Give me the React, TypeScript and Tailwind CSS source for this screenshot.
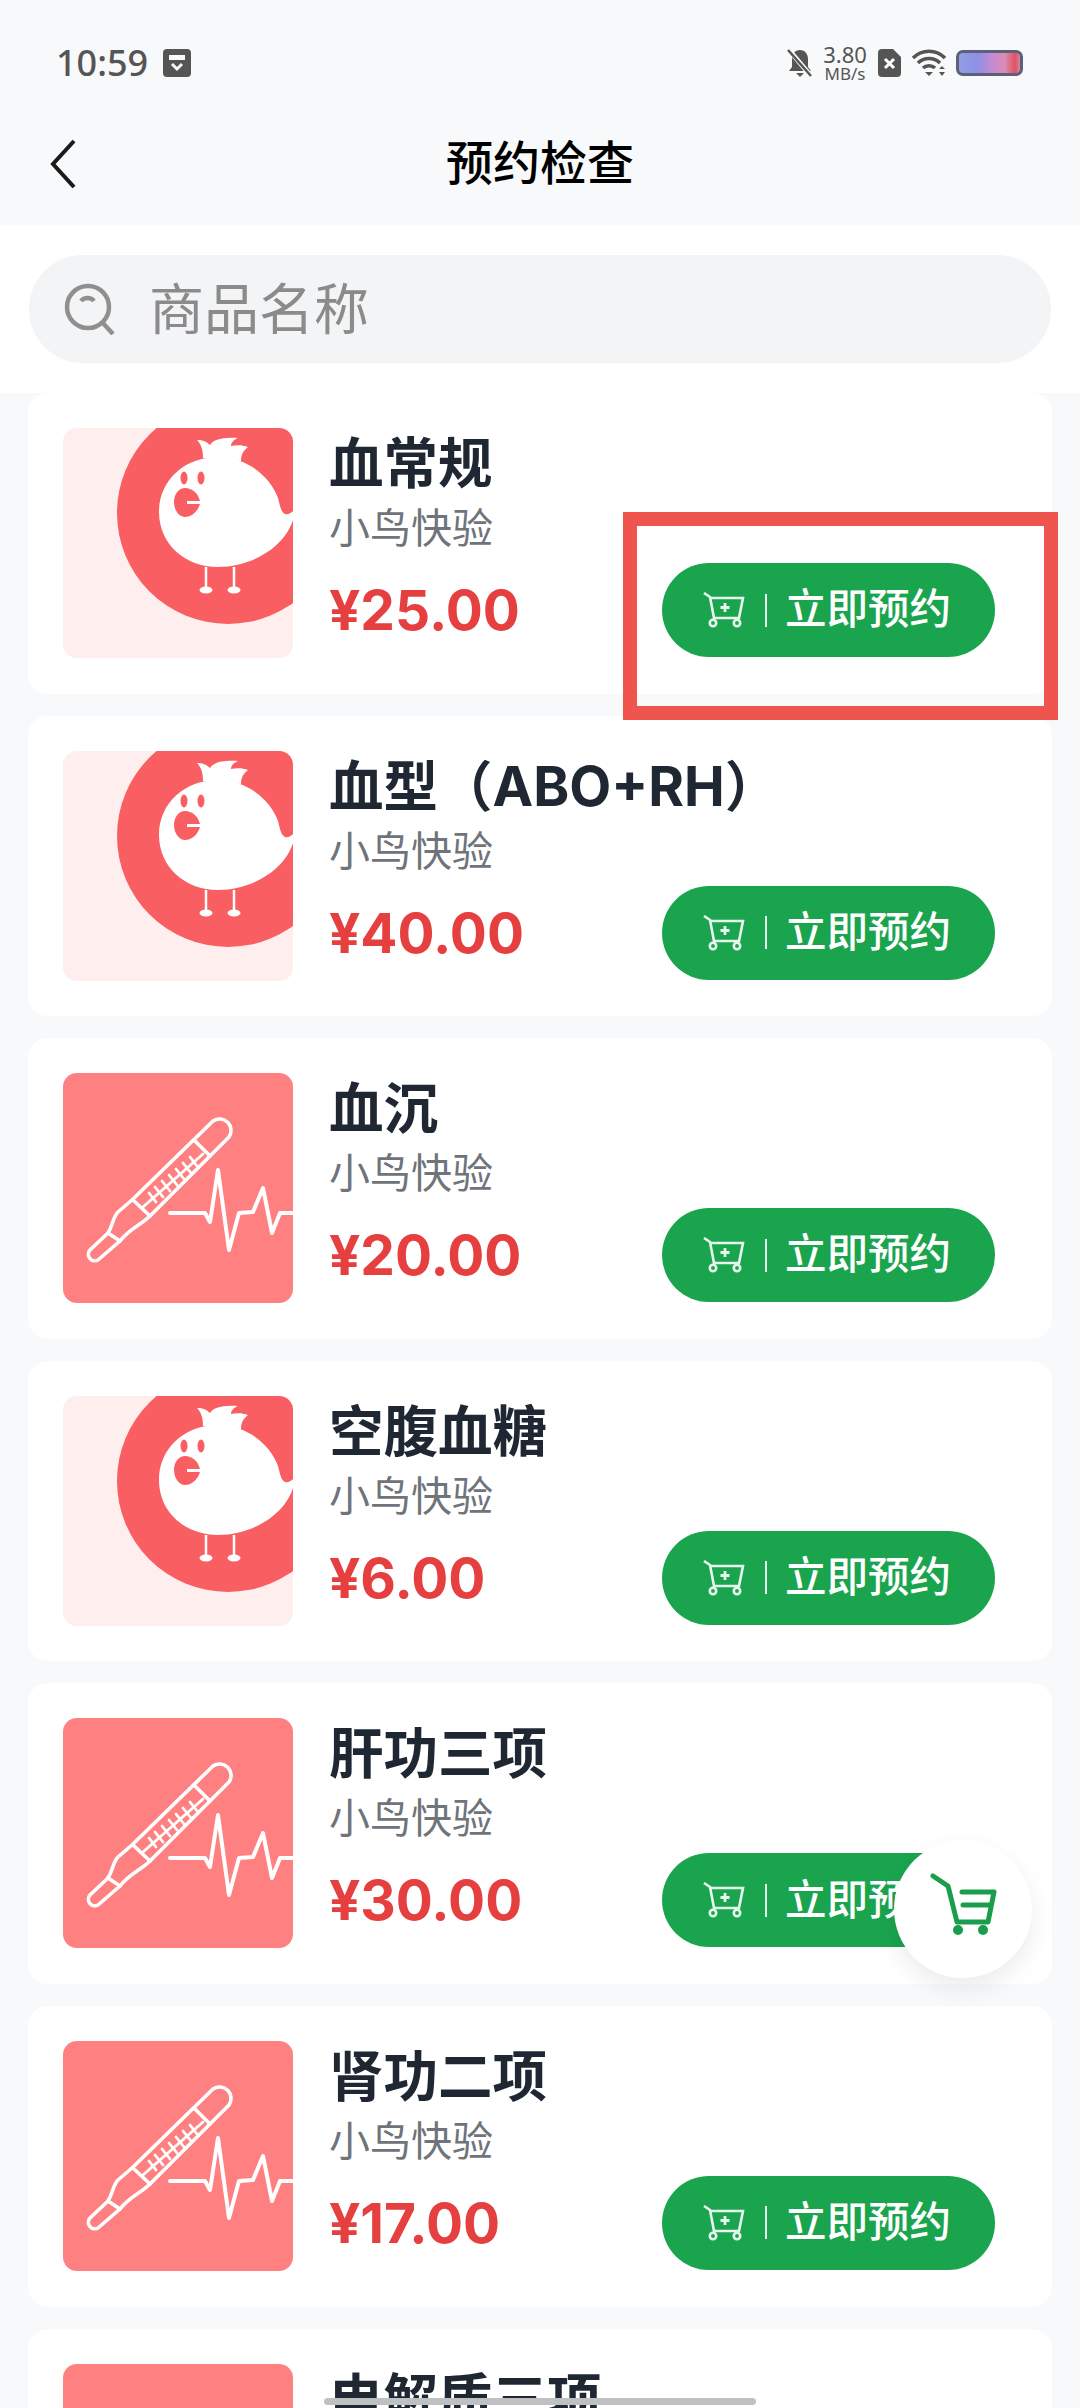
const products = [
  { name: "血常规", price: "¥25.00", image: "bird" },
  { name: "血型（ABO+RH）", price: "¥40.00", image: "bird" },
  { name: "血沉", price: "¥20.00", image: "thermo" },
  { name: "空腹血糖", price: "¥6.00", image: "bird" },
  { name: "肝功三项", price: "¥30.00", image: "thermo" },
  { name: "肾功二项", price: "¥17.00", image: "thermo" },
  { name: "电解质三项", price: "¥35.00", image: "thermo" },
];

function BirdImage() {
  return (
    <svg viewBox="0 0 230 230" className="h-full w-full">
      <rect width="230" height="230" fill="#feefee" />
      <circle cx="165" cy="85" r="111" fill="#f95f62" />
      {/* body and tail */}
      <path
        d="M96 84C96 52 122 29 155 29c30 0 53 21 60 41 2 8 3 14 7 16 3 1 6-1 8-3v9c-8 26-40 47-75 47-33 0-59-23-59-55z"
        fill="#fff"
      />
      {/* crest */}
      <path
        d="M140 30c0-8-2-14-6-18 6 0 10 2 13 5 3-5 11-8 28-7-5 2-7 5-7 8 5-1 12-1 17 1-4 3-7 7-7 14z"
        fill="#fff"
      />
      <ellipse cx="121" cy="50" rx="3.5" ry="6.5" fill="#f95f62" />
      <ellipse cx="138" cy="50" rx="3.5" ry="6.5" fill="#f95f62" />
      <path
        d="M111 74c0-8 5-14 11-14 7 0 13 5 15 13h-13v3h13c-2 7-8 13-15 13-6 0-11-7-11-15z"
        fill="#f95f62"
      />
      <path d="M143 139v20M171 139v20" stroke="#fff" strokeWidth="2.5" />
      <ellipse cx="143" cy="162" rx="6.5" ry="3.5" fill="#fff" />
      <ellipse cx="171" cy="162" rx="6.5" ry="3.5" fill="#fff" />
    </svg>
  );
}

function ThermoImage() {
  return (
    <svg viewBox="0 0 230 230" className="h-full w-full" fill="none" stroke="#fff" strokeLinecap="round" strokeLinejoin="round">
      <rect width="230" height="230" fill="#ff8080" stroke="none" />
      <path
        d="M27 177l18-17c5-8 5-16 10-21l14-12 81-79a11.5 11.5 0 0 1 16 16L87 143c-9 9-21 13-30 25l-22 19a6.5 6.5 0 0 1-8-10z"
        strokeWidth="3.6"
      />
      <path d="M45 160l12 8M70 127l17 16M131 67l16 16" strokeWidth="3.6" />
      <path
        d="M80 134l60-53M92 114l8 10M99 108l8 10M106 102l8 10M113 96l8 10M120 90l8 10M127 84l7 9M86 120l7 9"
        strokeWidth="2.8"
      />
      <path
        d="M107 140h35l5 9 8-52 11 80 10-37 14-1 10-24 9 45 8-20h13"
        strokeWidth="4"
      />
    </svg>
  );
}

function CartPlus() {
  return (
    <svg width="42" height="36" viewBox="0 0 42 36" fill="none" stroke="#e8f7ee" strokeWidth="2.6">
      <path d="M1 1l6 4 4 21h25l4-20H7" />
      <path d="M22 11v9M17.500 15.500h9" strokeWidth="2.8" />
      <circle cx="10" cy="31" r="3.200" />
      <circle cx="34" cy="31" r="3.200" />
    </svg>
  );
}

function ProductCard({ name, price, image }: { name: string; price: string; image: string }) {
  return (
    <div className="flex h-[300.6px] shrink-0 rounded-[20px] bg-white pt-[35px] pr-[57px] pl-[35px]">
      <div className="h-[230px] w-[230px] shrink-0 overflow-hidden rounded-[14px]">
        {image === "bird" ? <BirdImage /> : <ThermoImage />}
      </div>
      <div className="ml-[36px] flex flex-1 flex-col">
        <div className="mt-[1px] h-[68px] text-[54.5px] leading-[68px] font-bold text-[#1f2733]">{name}</div>
        <div className="mt-[3px] h-[56px] text-[41px] leading-[56px] text-[#6f747b]">小鸟快验</div>
        <div className="mt-[7px] flex items-center justify-between">
          <span className="text-[55px] leading-[94px] font-bold text-[#e5403f]">{price}</span>
          <div className="flex h-[94px] w-[333px] items-center justify-center rounded-full bg-[#1aa44e] pr-[3px] text-white">
            <CartPlus />
            <span className="mr-[18px] ml-[20px] h-[33px] w-[2px] bg-[#e8f7ee]" />
            <span className="text-[41.5px] leading-none font-medium">立即预约</span>
          </div>
        </div>
      </div>
    </div>
  );
}

function StatusBar() {
  return (
    <div className="flex h-[126px] items-center justify-between pr-[57px] pl-[56px] text-[#555]">
      <div className="flex items-center gap-[15px]">
        <span className="font-['Noto_Sans'] text-[36px] leading-none font-medium">10:59</span>
        <svg width="28" height="28" viewBox="0 0 28 28">
          <rect width="28" height="28" rx="4" fill="#555" />
          <path d="M6 6h16v5H6z" fill="#f8f9fa" />
          <path d="M9 15l5 5 5-5" fill="none" stroke="#f8f9fa" strokeWidth="3" />
        </svg>
      </div>
      <div className="flex items-center">
        <svg width="26" height="30" viewBox="0 0 26 30">
          <path d="M13 2c5 0 8 4 8 9v8l3 4H2l3-4v-8c0-5 3-9 8-9zM9 25h8l-4 4z" fill="#555" />
          <path d="M2 2l22 26" stroke="#f8f9fa" strokeWidth="5" />
          <path d="M1 2l23 26" stroke="#555" strokeWidth="2.5" />
        </svg>
        <div className="ml-[8px] flex w-[48px] flex-col items-center text-[#555]">
          <span className="font-['Noto_Sans'] text-[22px] leading-[22px]">3.80</span>
          <span className="font-['Noto_Sans'] text-[17px] leading-[18px]">MB/s</span>
        </div>
        <svg className="ml-[9px]" width="23" height="28" viewBox="0 0 23 28">
          <path d="M4 0h11l8 8v16a4 4 0 0 1-4 4H4a4 4 0 0 1-4-4V4a4 4 0 0 1 4-4z" fill="#555" />
          <path d="M7 10l9 9M16 10l-9 9" stroke="#fff" strokeWidth="3" />
        </svg>
        <svg className="ml-[11px]" width="34" height="28" viewBox="0 0 34 28" fill="none" stroke="#555" strokeWidth="3.500">
          <path d="M1 9c9-9 23-9 32 0M6 14c6-6 16-6 22 0M11 19c3-3 9-3 12 0" />
          <path d="M13 23h8l-4 4z" fill="#555" stroke="none" />
          <path d="M27 20l3-3 3 3zM27 23h6l-3 4z" fill="#555" stroke="none" />
        </svg>
        <div className="ml-[10px] h-[26px] w-[67px] rounded-[7px] border-[3px] border-[#5c6179] bg-[linear-gradient(90deg,#8fa0e0_0%,#8f8fe8_30%,#c58bd0_55%,#d98cb8_75%,#e3505f_92%,#c88aa8_100%)]" />
      </div>
    </div>
  );
}

export default function App() {
  return (
    <div className="relative h-[2408px] w-[1080px] overflow-hidden bg-[#f8f9fb] font-['Inter','Noto_Sans_CJK_SC',sans-serif]">
      <div className="h-[225px] bg-[#f8f9fa]">
        <StatusBar />
        <div className="relative flex h-[72px] items-center justify-center">
          <svg className="absolute left-[48px] top-[12px]" width="30" height="50" viewBox="0 0 30 50" fill="none" stroke="#1a1a1a" strokeWidth="4">
            <path d="M26 3L5 26l21 23" />
          </svg>
          <span className="text-[47px] leading-none font-medium text-black">预约检查</span>
        </div>
      </div>

      <div className="flex h-[168px] items-start bg-white px-[29px] pt-[30px]">
        <div className="flex h-[108px] w-full items-center rounded-full bg-[#f3f4f6] pl-[35px]">
          <svg width="52" height="52" viewBox="0 0 52 52" fill="none" stroke="#8f8f8f" strokeWidth="4.500">
            <circle cx="24" cy="24" r="21" />
            <path d="M17 18c3-4 10-4 13 0M38 39l11 12" />
          </svg>
          <span className="ml-[33px] text-[55px] leading-none text-[#8b8b8b]">商品名称</span>
        </div>
      </div>

      <div className="flex flex-col gap-[22px] px-[28px]">
        {products.map((p) => (
          <ProductCard key={p.name} {...p} />
        ))}
      </div>

      {/* annotation box */}
      <div className="absolute top-[512px] left-[623px] h-[208px] w-[435px] border-[14px] border-[#f0544f]" />

      {/* floating cart */}
      <div className="absolute top-[1840px] left-[894px] h-[138px] w-[138px] rounded-full bg-white shadow-[0_10px_24px_rgba(0,0,0,0.08)]">
        <svg width="138" height="138" viewBox="0 0 138 138" fill="none" stroke="#1a9e4d" strokeWidth="5" strokeLinecap="round" strokeLinejoin="round">
          <path d="M39 36l15 10 9 36h31l6-30H68M69 65h27" />
          <circle cx="64" cy="90" r="5" fill="#1a9e4d" stroke="none" />
          <circle cx="89" cy="90" r="5" fill="#1a9e4d" stroke="none" />
        </svg>
      </div>

      {/* home indicator */}
      <div className="absolute top-[2398px] left-[324px] h-[7px] w-[432px] rounded-full bg-[#bfc0c2]" />
    </div>
  );
}
